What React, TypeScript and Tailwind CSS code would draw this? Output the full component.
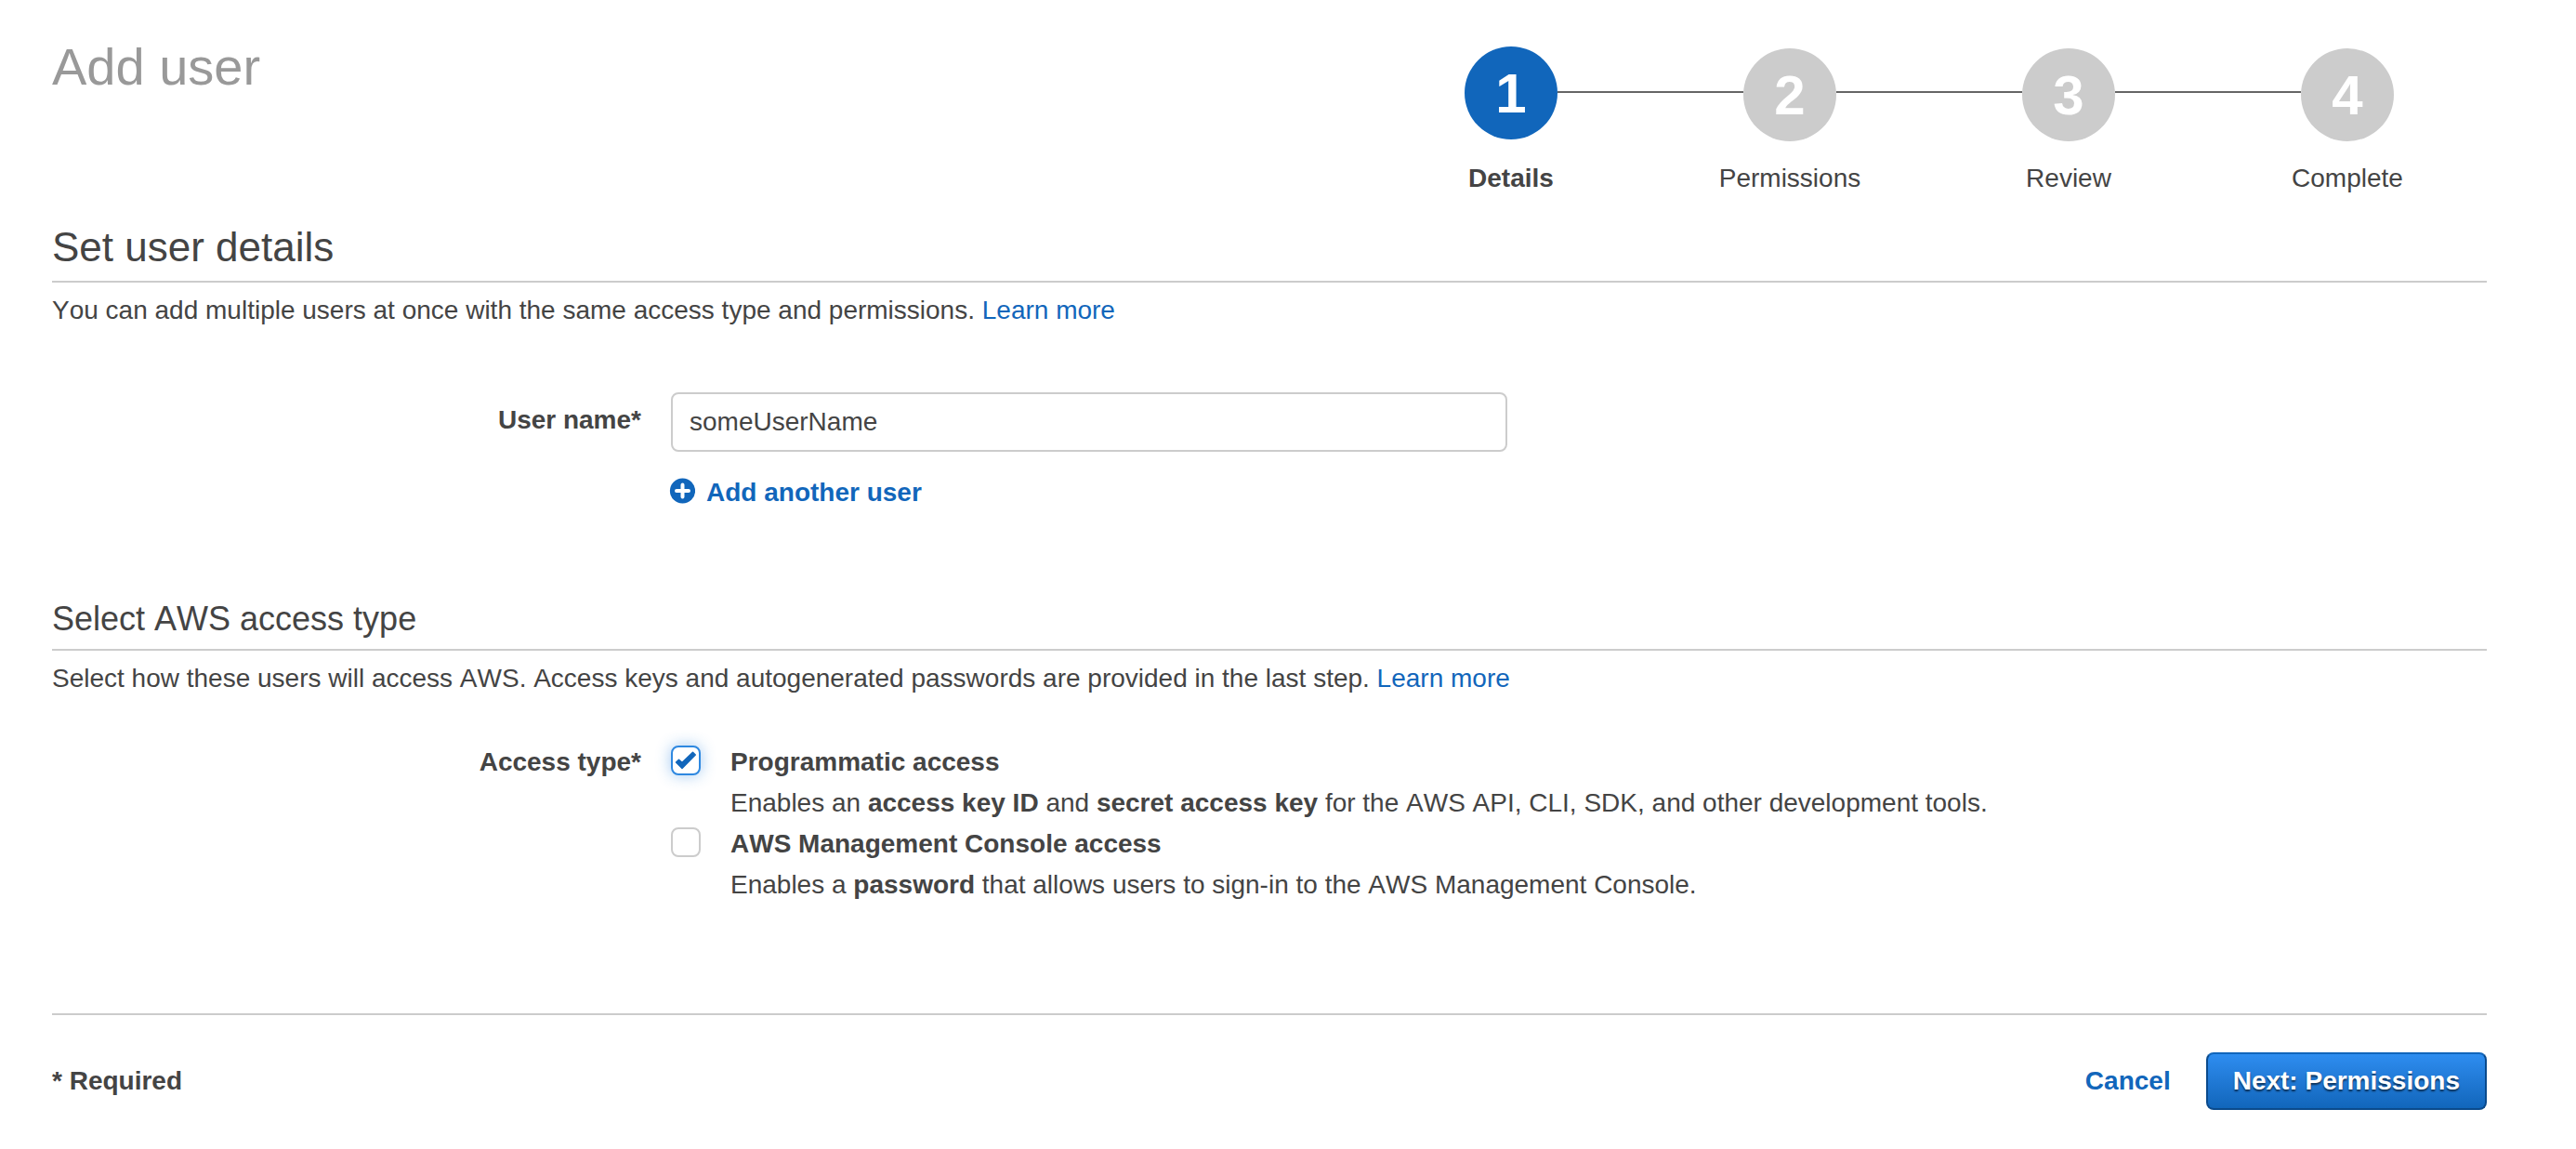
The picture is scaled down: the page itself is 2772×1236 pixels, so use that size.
import React, { useState } from "react";

const steps = ["Details", "Permissions", "Review", "Complete"];

function Stepper({ current }: { current: number }) {
  return (
    <ol className="flex w-[1200px] shrink-0">
      {steps.map((label, i) => {
        const active = i === current;
        return (
          <li key={label} className="flex flex-1 flex-col items-center">
            <div className="flex h-[102px] w-full">
              <span className={i === 0 ? "mt-12 h-0.5 flex-1" : "mt-12 h-0.5 flex-1 bg-[#666]"} />
              <span
                className={
                  active
                    ? "flex size-[100px] items-center justify-center rounded-full bg-[#1166bb] pt-0.5 text-[60px] leading-none font-bold text-white"
                    : "mt-0.5 flex size-[100px] items-center justify-center rounded-full bg-[#ccc] pt-0.5 text-[60px] leading-none font-bold text-white"
                }
              >
                {i + 1}
              </span>
              <span
                className={
                  i === steps.length - 1 ? "mt-12 h-0.5 flex-1" : "mt-12 h-0.5 flex-1 bg-[#666]"
                }
              />
            </div>
            <span className={active ? "mt-[18px] font-bold" : "mt-[18px]"}>{label}</span>
          </li>
        );
      })}
    </ol>
  );
}

function AccessOption({
  id,
  title,
  defaultChecked,
  children,
}: {
  id: string;
  title: string;
  defaultChecked?: boolean;
  children: React.ReactNode;
}) {
  const [checked, setChecked] = useState(!!defaultChecked);
  return (
    <div className="flex gap-8">
      <span className="mt-1 grid size-8 shrink-0">
        <input
          id={id}
          type="checkbox"
          checked={checked}
          onChange={(e) => setChecked(e.target.checked)}
          className="col-start-1 row-start-1 size-8 appearance-none rounded-lg border-2 border-[#ccc] bg-white checked:border-[#2e88e0] checked:shadow-[0_0_16px_rgba(46,136,224,0.45)]"
        />
        {checked && (
          <svg viewBox="0 0 32 32" className="pointer-events-none col-start-1 row-start-1 size-8">
            <path
              d="M5.5 18 L8.5 15.2 L12 18.2 L23.5 7.2 L26.3 10 L12 24.5 Z"
              fill="#1166bb"
              stroke="#1166bb"
              strokeWidth="1.4"
              strokeLinejoin="round"
            />
          </svg>
        )}
      </span>
      <div>
        <label htmlFor={id} className="block font-bold">
          {title}
        </label>
        <p>{children}</p>
      </div>
    </div>
  );
}

export default function App() {
  return (
    <main className="bg-white pt-[50px] pr-24 pb-10 pl-14 font-['Liberation_Sans',Arial,sans-serif] text-[28px] leading-[44px] text-[#444] [font-kerning:none]">
      <header className="flex items-start justify-between">
        <h1 className="-mt-2.5 text-[56px] leading-[64px] text-[#999]">Add user</h1>
        <Stepper current={0} />
      </header>

      <section>
        <h2 className="mt-6 border-b-2 border-[#ccc] pb-2 text-[44px] leading-[56px]">
          Set user details
        </h2>
        <p className="mt-2">
          You can add multiple users at once with the same access type and permissions.{" "}
          <a href="#users" className="text-[#1166bb]">
            Learn more
          </a>
        </p>
        <div className="mt-[66px] flex gap-8">
          <label htmlFor="username" className="mt-2 w-[634px] shrink-0 text-right font-bold">
            User name*
          </label>
          <div>
            <input
              id="username"
              type="text"
              defaultValue="someUserName"
              className="block h-16 w-[900px] rounded-lg border-2 border-[#ccc] px-[18px]"
            />
            <button type="button" className="mt-[22px] flex items-start gap-3 font-bold text-[#1166bb]">
              <svg viewBox="0 0 28 28" className="mt-1.5 -ml-0.5 size-7">
                <circle cx="14.5" cy="14" r="13.6" fill="currentColor" />
                <path
                  d="M14.5 7.5v13M8 14h13"
                  stroke="#fff"
                  strokeWidth="4"
                  strokeLinecap="round"
                />
              </svg>
              Add another user
            </button>
          </div>
        </div>
      </section>

      <section>
        <h3 className="mt-[88px] border-b-2 border-[#ccc] pb-1.5 text-[36px] leading-[52px]">
          Select AWS access type
        </h3>
        <p className="mt-2">
          Select how these users will access AWS. Access keys and autogenerated passwords are provided in the last step.{" "}
          <a href="#access" className="text-[#1166bb]">
            Learn more
          </a>
        </p>
        <div className="mt-[46px] flex gap-8" role="group" aria-labelledby="access-type">
          <span id="access-type" className="w-[634px] shrink-0 text-right font-bold">
            Access type*
          </span>
          <div>
            <AccessOption id="programmatic" title="Programmatic access" defaultChecked>
              Enables an <b>access key ID</b> and <b>secret access key</b> for the AWS API, CLI, SDK, and other
              development tools.
            </AccessOption>
            <AccessOption id="console" title="AWS Management Console access">
              Enables a <b>password</b> that allows users to sign-in to the AWS Management Console.
            </AccessOption>
          </div>
        </div>
      </section>

      <footer className="mt-[116px] flex items-center justify-between border-t-2 border-[#ccc] pt-10">
        <span className="font-bold">* Required</span>
        <div className="flex items-center gap-[38px]">
          <button type="button" className="font-bold text-[#1166bb]">
            Cancel
          </button>
          <button
            type="button"
            className="h-[62px] rounded-lg border-2 border-[#0a4a8c] border-t-[#1166bb] bg-linear-to-b from-[#2e8df0] to-[#1166bb] px-[27px] font-bold text-white [text-shadow:0_2px_2px_rgba(0,0,0,0.6)]"
          >
            Next: Permissions
          </button>
        </div>
      </footer>
    </main>
  );
}
